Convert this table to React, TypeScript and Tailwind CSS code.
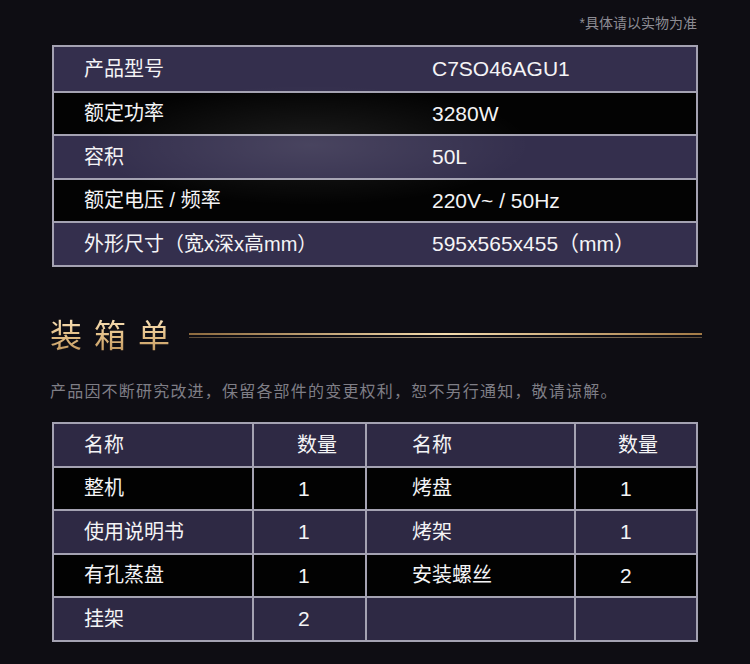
import React from "react";

const specs = [
  ["产品型号", "C7SO46AGU1"],
  ["额定功率", "3280W"],
  ["容积", "50L"],
  ["额定电压 / 频率", "220V~ / 50Hz"],
  ["外形尺寸（宽x深x高mm）", "595x565x455（mm）"],
];

const packing = [
  ["整机", "1", "烤盘", "1"],
  ["使用说明书", "1", "烤架", "1"],
  ["有孔蒸盘", "1", "安装螺丝", "2"],
  ["挂架", "2", "", ""],
];

export default function App() {
  return (
    <div className="w-[750px] h-[664px] bg-[#0e0d13] font-['Liberation_Sans','Noto_Sans_CJK_SC',sans-serif] text-[#f4f4f6] overflow-hidden">
      {/* note */}
      <div className="flex justify-end pr-[53px] pt-[14px] h-[45px]">
        <span className="text-[14px] leading-[18px] text-[#8d8c94]">*具体请以实物为准</span>
      </div>

      {/* spec table */}
      <div className="relative mx-[52px] border-2 border-[#a4a2b2]">
        {specs.map(([k, v], i) => (
          <div
            key={k}
            className={`flex items-center h-[43.5px] ${i > 0 ? "border-t-2 border-[#a4a2b2]" : ""} ${
              i % 2 === 0 ? "bg-[#342f4d]" : "bg-[#030303]"
            }`}
          >
            <div className="w-[346px] pl-[30px] text-[20px]">{k}</div>
            <div className="pl-[32px] text-[21px]">{v}</div>
          </div>
        ))}
        {/* light streak */}
        <div className="pointer-events-none absolute inset-0 bg-[radial-gradient(ellipse_220px_60px_at_40%_45%,rgba(255,255,255,0.10),transparent)]" />
      </div>

      {/* heading */}
      <div className="flex items-center mt-[49px] pl-[50px] pr-[48px] h-[40px]">
        <h2 className="text-[32px] leading-[40px] tracking-[12px] bg-gradient-to-b from-[#fbe6bf] via-[#e2bd84] to-[#b98e55] bg-clip-text text-transparent">
          装箱单
        </h2>
        <div className="flex-1 ml-[7px] flex flex-col gap-[2px]">
          <div className="h-[2px] bg-gradient-to-r from-[#8d6a3e] via-[#f4dcae] to-[#a47b46]" />
          <div className="h-[1px] bg-gradient-to-r from-[#5a4a38] via-[#a89880] to-[#5e4d3a]" />
        </div>
      </div>

      <p className="mt-[26px] pl-[50px] text-[16px] tracking-[1.2px] leading-[20px] text-[#7f7e86]">
        产品因不断研究改进，保留各部件的变更权利，恕不另行通知，敬请谅解。
      </p>

      {/* packing list */}
      <div className="mx-[52px] mt-[20px] border-2 border-[#a4a2b2]">
        <div className="grid grid-cols-[198px_113px_209px_126px] h-[42px] bg-[#2e2944] text-[20px] items-stretch">
          <div className="flex items-center pl-[30px]">名称</div>
          <div className="flex items-center pl-[43px] border-l-2 border-[#a4a2b2]">数量</div>
          <div className="flex items-center pl-[45px] border-l-2 border-[#a4a2b2]">名称</div>
          <div className="flex items-center pl-[42px] border-l-2 border-[#a4a2b2]">数量</div>
        </div>
        {packing.map((r, i) => (
          <div
            key={i}
            className={`grid grid-cols-[198px_113px_209px_126px] h-[43.5px] border-t-2 border-[#a4a2b2] text-[20px] ${
              i % 2 === 0 ? "bg-[#020202]" : "bg-[#2e2944]"
            }`}
          >
            <div className="flex items-center pl-[30px]">{r[0]}</div>
            <div className="flex items-center pl-[44px] border-l-2 border-[#a4a2b2] text-[21px]">{r[1]}</div>
            <div className="flex items-center pl-[45px] border-l-2 border-[#a4a2b2]">{r[2]}</div>
            <div className="flex items-center pl-[44px] border-l-2 border-[#a4a2b2] text-[21px]">{r[3]}</div>
          </div>
        ))}
      </div>
    </div>
  );
}
